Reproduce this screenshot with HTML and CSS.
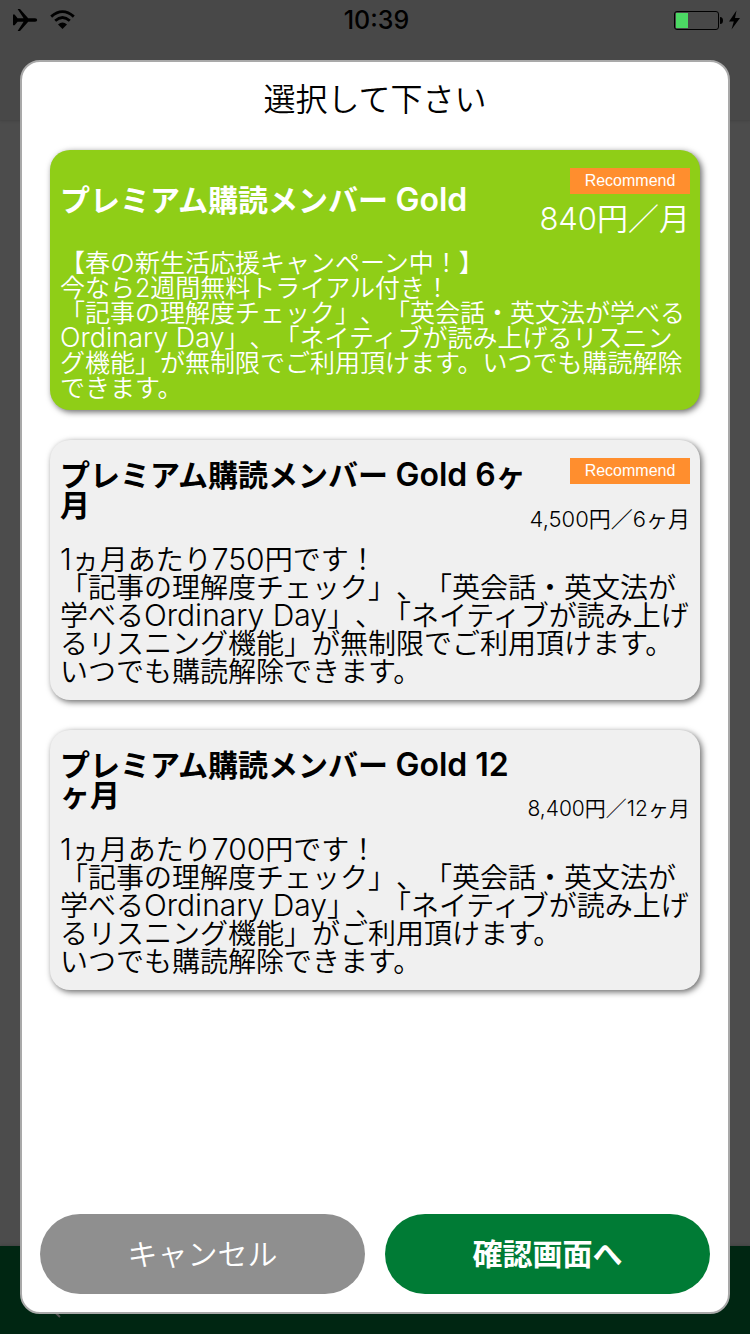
FILE: index.html
```
<!DOCTYPE html>
<html lang="ja">
<head>
    <meta charset="UTF-8">
    <meta name="viewport" content="width=device-width, initial-scale=1.0">
    <title>購読プランの選択</title>
    <link rel="stylesheet" href="styles.css">
</head>
<body>

    <!-- Page behind the dialog -->
    <div class="page">
        <header class="page-header">
            <div class="status-bar">
                <div class="status-left">
                    <svg width="25" height="24" viewBox="0 0 25 24">
                        <path d="M0 6.5 H1.6 L4.6 10.2 H10.6 L4.6 1 H7 L15.2 10.2 H22 Q24.2 10.4 24.2 12 Q24.2 13.6 22 13.8 H15.2 L7 23 H4.6 L10.6 13.8 H4.6 L1.6 17.2 H0 Z"/>
                    </svg>
                    <svg width="25" height="20" viewBox="0 0 25 20">
                        <path d="M1.2 6.6 Q12.5 -3.4 23.8 6.6" fill="none" stroke="#000" stroke-width="2.8"/>
                        <path d="M5.2 10.8 Q12.5 4.2 19.8 10.8" fill="none" stroke="#000" stroke-width="2.8"/>
                        <path d="M8 14.4 Q12.5 10.6 17 14.4 L12.5 19 Z"/>
                    </svg>
                </div>
                <time class="clock">10:39</time>
                <div class="status-right">
                    <svg width="67" height="22" viewBox="0 0 67 22">
                        <rect x="1.5" y="2.5" width="44" height="18" rx="2.5" fill="none" stroke="#000"/>
                        <rect x="3" y="4" width="12" height="15" fill="#4cd964"/>
                        <path d="M47 8 Q50 8 50 11.5 Q50 15 47 15 Z"/>
                        <path d="M63.5 1.5 L56 12.5 H60.8 L58.5 20.5 L67 9 H62 Z"/>
                    </svg>
                </div>
            </div>
        </header>
        <main class="page-body"></main>
        <footer class="tab-bar">
            <svg width="22" height="28" viewBox="0 0 22 28">
                <path d="M19 1 L6 14 L20 27" fill="none" stroke="#525252" stroke-width="2"/>
            </svg>
        </footer>
    </div>

    <!-- Plan dialog -->
    <div class="overlay">
        <form class="dialog" role="dialog" aria-labelledby="dialogTitle">
            <h1 class="dialog-title" id="dialogTitle">選択して下さい</h1>

            <div class="plans">
                <label class="plan plan-selected">
                    <input class="plan-radio" type="radio" name="plan" value="1" checked>
                    <span class="plan-head">
                        <span class="plan-name">プレミアム購読メンバー <span class="latin-bold">Gold</span></span>
                        <span class="plan-side">
                            <span class="badge">Recommend</span>
                            <span class="price price-large">840円／月</span>
                        </span>
                    </span>
                    <span class="plan-text plan-text-small">【春の新生活応援キャンペーン中！】<br>今なら2週間無料トライアル付き！<br>「記事の理解度チェック」、「英会話・英文法が学べる<span class="latin-small">Ordinary Day</span>」、「ネイティブが読み上げるリスニング機能」が無制限でご利用頂けます。いつでも購読解除できます。</span>
                </label>

                <label class="plan">
                    <input class="plan-radio" type="radio" name="plan" value="6">
                    <span class="plan-head">
                        <span class="plan-name">プレミアム購読メンバー <span class="latin-bold">Gold 6</span>ヶ月</span>
                        <span class="plan-side">
                            <span class="badge">Recommend</span>
                            <span class="price">4,500円／6ヶ月</span>
                        </span>
                    </span>
                    <span class="plan-text"><span class="latin">1</span>ヵ月あたり<span class="latin">750</span>円です！<br>「記事の理解度チェック」、「英会話・英文法が学べる<span class="latin">Ordinary Day</span>」、「ネイティブが読み上げるリスニング機能」が無制限でご利用頂けます。<br>いつでも購読解除できます。</span>
                </label>

                <label class="plan">
                    <input class="plan-radio" type="radio" name="plan" value="12">
                    <span class="plan-head">
                        <span class="plan-name">プレミアム購読メンバー <span class="latin-bold">Gold 12</span>ヶ月</span>
                        <span class="plan-side">
                            <span class="price price-small">8,400円／12ヶ月</span>
                        </span>
                    </span>
                    <span class="plan-text"><span class="latin">1</span>ヵ月あたり<span class="latin">700</span>円です！<br>「記事の理解度チェック」、「英会話・英文法が学べる<span class="latin">Ordinary Day</span>」、「ネイティブが読み上げるリスニング機能」がご利用頂けます。<br>いつでも購読解除できます。</span>
                </label>
            </div>

            <div class="actions">
                <button class="btn cancel-btn" type="button">キャンセル</button>
                <button class="btn confirm-btn" type="submit">確認画面へ</button>
            </div>
        </form>
    </div>

</body>
</html>
```
FILE: styles.css
```
* { box-sizing: border-box; }
body {
    margin: 0;
    font-family: Inter, "Noto Sans CJK JP", sans-serif;
    font-weight: 350;
    color: #000;
    text-spacing-trim: space-all;
}

/* Page behind the dialog */
.page {
    display: flex;
    flex-direction: column;
    min-height: 100vh;
    background: #4c4c4c;
}
.page-header {
    height: 120px;
    background: #484848;
    box-shadow: 0 1px 2px #424242;
}
.status-bar {
    display: grid;
    grid-template-columns: 1fr auto 1fr;
    align-items: center;
    height: 40px;
    padding: 0 10px 0 13px;
}
.status-left { display: flex; align-items: center; gap: 12px; }
.status-right { display: flex; justify-content: flex-end; }
.clock { font-size: 25px; font-weight: 500; }
.page-body { flex: 1; }
.tab-bar {
    height: 88px;
    padding: 44px 40px 0;
    background: #002612;
    box-shadow: 0 -1px 2px #424242;
}

/* Dialog */
.overlay {
    position: absolute;
    inset: 0;
    display: flex;
    padding: 60px 20px 20px;
}
.dialog {
    flex: 1;
    display: flex;
    flex-direction: column;
    padding: 18px;
    background: #fff;
    border: 2px solid #a9a9a9;
    border-radius: 20px;
}
.dialog-title {
    margin: 0 0 30px;
    font-size: 32px;
    font-weight: 350;
    line-height: 40px;
    text-align: center;
}
.plans {
    flex: 1;
    display: flex;
    flex-direction: column;
    gap: 30px;
    padding: 0 10px;
}
.plan {
    display: flex;
    flex-direction: column;
    min-height: 260px;
    padding: 0 10px 8px;
    background: #f0f0f0;
    border-radius: 20px;
    box-shadow: 2px 2px 6px rgba(0, 0, 0, 0.6);
    cursor: pointer;
}
.plan-selected { background: #8fce17; color: #fff; }
.plan-radio {
    position: absolute;
    opacity: 0;
    pointer-events: none;
}
.plan-head {
    display: flex;
    justify-content: space-between;
    min-height: 100px;
}
.plan-name {
    flex: 1;
    align-self: center;
    font-size: 30px;
    font-weight: 600;
    line-height: 30px;
    word-break: break-all;
}
.plan-side {
    display: flex;
    flex-direction: column;
    align-items: flex-end;
    width: 160px;
    padding: 18px 0 8px;
}
.badge {
    width: 120px;
    background: #ff8e2e;
    color: #fff;
    font-size: 16px;
    font-family: "Liberation Sans", sans-serif;
    font-weight: 400;
    line-height: 26px;
    text-align: center;
}
.price {
    margin-top: auto;
    font-size: 22px;
    line-height: 26px;
    white-space: nowrap;
}
.price-large { font-size: 31px; line-height: 46px; }
.price-small { font-size: 21px; }
.plan-text {
    margin: auto 0;
    font-size: 28px;
    line-height: 28px;
}
.plan-text-small { font-size: 25px; line-height: 25px; }

/* Latin runs are set a little larger than the kana around them */
.latin, .latin-small, .latin-bold { line-height: 1px; }
.latin { font-size: 30px; }
.latin-small { font-size: 27px; }
.latin-bold { font-size: 32px; }

/* Buttons */
.actions { display: flex; gap: 20px; }
.btn {
    flex: 1;
    height: 80px;
    padding: 0 0 4px;
    border: none;
    border-radius: 40px;
    color: #fff;
    font-family: inherit;
    font-size: 30px;
    cursor: pointer;
}
.cancel-btn { background: #8f8f8f; font-weight: 350; }
.confirm-btn { background: #007b35; font-weight: 700; }
```
